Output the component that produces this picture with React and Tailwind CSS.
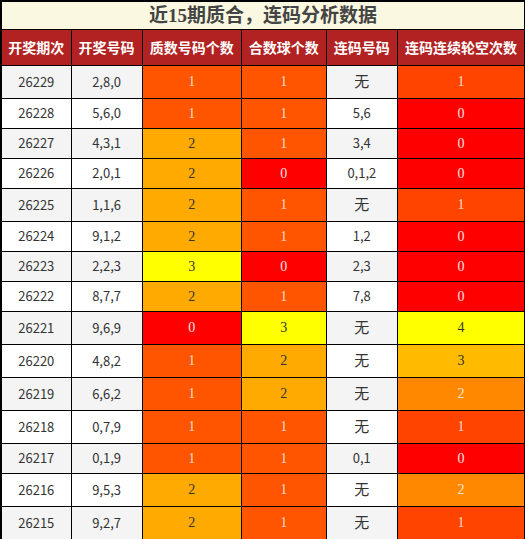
import React from "react";

const rows = [
  ["26229", "2,8,0", 1, 1, "无", 1],
  ["26228", "5,6,0", 1, 1, "5,6", 0],
  ["26227", "4,3,1", 2, 1, "3,4", 0],
  ["26226", "2,0,1", 2, 0, "0,1,2", 0],
  ["26225", "1,1,6", 2, 1, "无", 1],
  ["26224", "9,1,2", 2, 1, "1,2", 0],
  ["26223", "2,2,3", 3, 0, "2,3", 0],
  ["26222", "8,7,7", 2, 1, "7,8", 0],
  ["26221", "9,6,9", 0, 3, "无", 4],
  ["26220", "4,8,2", 1, 2, "无", 3],
  ["26219", "6,6,2", 1, 2, "无", 2],
  ["26218", "0,7,9", 1, 1, "无", 1],
  ["26217", "0,1,9", 1, 1, "0,1", 0],
  ["26216", "9,5,3", 2, 1, "无", 2],
  ["26215", "9,2,7", 2, 1, "无", 1],
];

const mapA = {
  0: "bg-[#ff0000] text-[#ffe0e0]",
  1: "bg-[#ff5500] text-[#ffd8c0]",
  2: "bg-[#ffaa00] text-[#333333]",
  3: "bg-[#ffff00] text-[#333333]",
};
const mapB = {
  0: "bg-[#ff0000] text-[#ffe0e0]",
  1: "bg-[#ff4400] text-[#ffd8c0]",
  2: "bg-[#ff8800] text-[#ffe8d0]",
  3: "bg-[#ffbb00] text-[#333333]",
  4: "bg-[#ffff00] text-[#333333]",
};

const sans = "font-['Noto_Sans_CJK_SC',sans-serif]";
const serif = "font-['Liberation_Serif','Noto_Sans_CJK_SC',serif]";

const headers = ["开奖期次", "开奖号码", "质数号码个数", "合数球个数", "连码号码", "连码连续轮空次数"];
const widths = ["w-[70px]", "w-[71px]", "w-[99px]", "w-[85px]", "w-[71px]", "w-[127px]"];

export default function App() {
  return (
    <div className="w-[525px] h-[539px] overflow-hidden bg-white">
      <table className="w-[525px] table-fixed border-collapse border-t-2 border-l-2 border-black">
        <colgroup>
          {widths.map((w, i) => (
            <col key={i} className={w} />
          ))}
        </colgroup>
        <tbody>
          <tr className="h-[28px]">
            <td
              colSpan={6}
              className={`border border-black bg-[#faf8e0] text-center text-[19px] font-bold text-[#444444] leading-none ${serif}`}
            >
              近15期质合，连码分析数据
            </td>
          </tr>
          <tr className="h-[36px]">
            {headers.map((h, i) => (
              <td
                key={i}
                className={`border border-black bg-[#b22222] text-center text-[14px] font-bold text-white whitespace-nowrap ${sans}`}
              >
                {h}
              </td>
            ))}
          </tr>
          {rows.map((r, idx) => {
            const base = idx % 2 === 0 ? "bg-[#f4f4f4]" : "bg-white";
            const tall = r[4] === "无";
            return (
              <tr key={r[0]} className={tall ? "h-[33px]" : "h-[30px]"}>
                <td className={`border border-black ${base} text-center text-[13px] text-[#333333] ${sans}`}>{r[0]}</td>
                <td className={`border border-black ${base} text-center text-[13px] text-[#333333] ${sans}`}>{r[1]}</td>
                <td className={`border border-black ${mapA[r[2]]} text-center text-[14px] ${serif}`}>{r[2]}</td>
                <td className={`border border-black ${mapA[r[3]]} text-center text-[14px] ${serif}`}>{r[3]}</td>
                <td className={`border border-black ${base} text-center ${tall ? "text-[15px]" : "text-[13px]"} text-[#333333] ${sans}`}>{r[4]}</td>
                <td className={`border border-black ${mapB[r[5]]} text-center text-[14px] ${serif}`}>{r[5]}</td>
              </tr>
            );
          })}
        </tbody>
      </table>
    </div>
  );
}
